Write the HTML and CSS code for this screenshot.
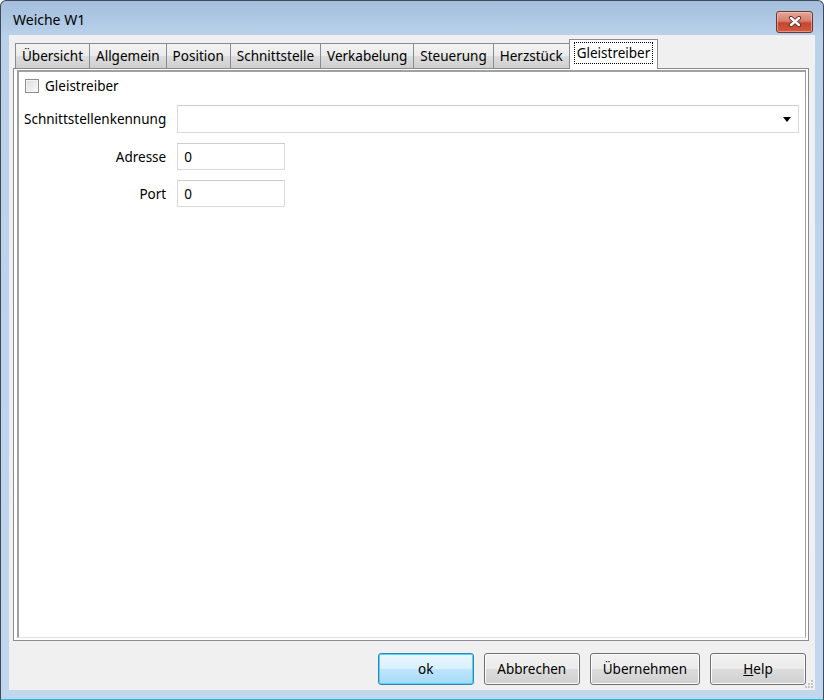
FILE: index.html
```html
<!DOCTYPE html>
<html lang="de">
<head>
    <meta charset="UTF-8">
    <title>Weiche W1</title>
    <link rel="stylesheet" href="styles.css">
</head>
<body>
    <div class="window">
        <div class="titlebar">
            <span class="title">Weiche W1</span>
            <div class="close-btn">
                <svg width="14" height="11" viewBox="0 0 14 11">
                    <path d="M3 2 L11 9 M11 2 L3 9" stroke="#5a2a24" stroke-width="4.2" stroke-linecap="round"/>
                    <path d="M3 2 L11 9 M11 2 L3 9" stroke="#ffffff" stroke-width="2.4" stroke-linecap="round"/>
                </svg>
            </div>
        </div>

        <div class="client">
            <div class="tabs">
                <div class="tab">Übersicht</div>
                <div class="tab">Allgemein</div>
                <div class="tab">Position</div>
                <div class="tab">Schnittstelle</div>
                <div class="tab">Verkabelung</div>
                <div class="tab">Steuerung</div>
                <div class="tab">Herzstück</div>
                <div class="tab active"><span class="focus">Gleistreiber</span></div>
            </div>

            <div class="panel">
                <div class="page">
                    <label class="check-row">
                        <span class="checkbox"></span>
                        Gleistreiber
                    </label>

                    <div class="form">
                        <label class="form-label">Schnittstellenkennung</label>
                        <div class="combo"><span class="arrow"></span></div>

                        <label class="form-label" for="adresse">Adresse</label>
                        <input class="field" type="text" id="adresse" value="0">

                        <label class="form-label" for="port">Port</label>
                        <input class="field" type="text" id="port" value="0">
                    </div>
                </div>
            </div>

            <div class="buttons">
                <button class="btn default">ok</button>
                <button class="btn">Abbrechen</button>
                <button class="btn">Übernehmen</button>
                <button class="btn"><u>H</u>elp</button>
            </div>

            <svg class="grip" width="10" height="10" viewBox="0 0 10 10">
                <rect x="7" y="1" width="2" height="2" fill="#c4c4c4"/>
                <rect x="4" y="4" width="2" height="2" fill="#c4c4c4"/>
                <rect x="7" y="4" width="2" height="2" fill="#c4c4c4"/>
                <rect x="1" y="7" width="2" height="2" fill="#c4c4c4"/>
                <rect x="4" y="7" width="2" height="2" fill="#c4c4c4"/>
                <rect x="7" y="7" width="2" height="2" fill="#c4c4c4"/>
            </svg>
        </div>
    </div>
</body>
</html>
```

FILE: styles.css
```css
body {
    margin: 0;
    font-family: "Noto Sans", "Open Sans", sans-serif;
    font-size: 13.5px;
    color: #000;
}
.window {
    width: 824px;
    height: 700px;
    box-sizing: border-box;
    border: 1px solid #3e4a57;
    border-bottom-color: #2ab7d6;
    border-radius: 6px 6px 0 0;
    background: linear-gradient(#a3bddb, #b9d1ea 34px, #c1d7ee);
    display: flex;
    flex-direction: column;
}
.titlebar {
    height: 34px;
    flex-shrink: 0;
    display: flex;
    align-items: center;
    justify-content: space-between;
    padding: 0 10px 0 12px;
}
.title {
    font-size: 14px;
    margin-top: 2px;
}
.close-btn {
    width: 35px;
    height: 20px;
    margin-top: 7px;
    border: 1px solid #6b3831;
    border-radius: 3px;
    background: linear-gradient(#e8a596, #d6806f 45%, #c6462f 55%, #d05a3e);
    box-shadow: inset 0 0 0 1px rgba(255, 220, 210, 0.45);
    display: flex;
    align-items: center;
    justify-content: center;
}
.client {
    position: relative;
    flex: 1;
    margin: 0 8px 9px 8px;
    background: #f0f0f0;
    display: flex;
    flex-direction: column;
    padding: 5px 6px 5px 4px;
}
.tabs {
    display: flex;
    align-items: flex-end;
    height: 28px;
    padding-left: 2px;
    position: relative;
    z-index: 1;
}
.tab {
    height: 25px;
    line-height: 24px;
    padding: 0 6px;
    border: 1px solid #898c95;
    border-bottom: none;
    border-left: none;
    background: linear-gradient(#f3f3f3, #ebebeb 50%, #dddddd 50%, #cfcfcf);
    box-sizing: border-box;
}
.tab:first-child {
    border-left: 1px solid #898c95;
}
.tab.active {
    height: 30px;
    margin-bottom: -1px;
    margin-left: -1px;
    border-left: 1px solid #898c95;
    background: #fff;
    padding: 2px 4px 0 4px;
    line-height: 22px;
}
.focus {
    display: block;
    border: 1px dotted #000;
    padding: 0 2px;
    line-height: 20px;
}
.panel {
    flex: 1;
    border: 1px solid #898c95;
    background: #fff;
    padding: 1px 2px 2px 3px;
    display: flex;
}
.page {
    flex: 1;
    border: 1px solid #e3e3e3;
    border-top: 2px solid #a0a0a0;
    border-left: 2px solid #a0a0a0;
    border-right-color: #a0a0a0;
    padding: 6px 5px 0 5px;
}
.check-row {
    display: flex;
    align-items: center;
    gap: 6px;
    height: 16px;
}
.checkbox {
    width: 12px;
    height: 12px;
    margin-left: 1px;
    border: 1px solid #8e8f8f;
    background: linear-gradient(135deg, #dcdcdc, #fbfbfb);
    box-shadow: inset 0 0 0 1px #f4f4f4;
}
.form {
    display: grid;
    grid-template-columns: auto 1fr;
    column-gap: 11px;
    row-gap: 10px;
    margin-top: 11px;
    align-items: center;
}
.form-label {
    justify-self: end;
}
.combo {
    height: 26px;
    border: 1px solid #dadada;
    border-top-color: #cdcdcd;
    position: relative;
    margin-right: 1px;
}
.arrow {
    position: absolute;
    right: 7px;
    top: 11px;
    border-left: 4px solid transparent;
    border-right: 4px solid transparent;
    border-top: 5px solid #000;
}
.field {
    width: 108px;
    height: 27px;
    box-sizing: border-box;
    border: 1px solid #dadada;
    border-top-color: #cdcdcd;
    padding: 0 6px;
    font-family: inherit;
    font-size: 13.5px;
    outline: none;
}
.buttons {
    display: flex;
    justify-content: flex-end;
    gap: 10px;
    margin-top: 12px;
    padding-right: 3px;
}
.btn {
    min-width: 96px;
    height: 32px;
    padding: 0 12px;
    border: 1px solid #707070;
    border-radius: 3px;
    background: linear-gradient(#f2f2f2, #ebebeb 50%, #dddddd 50%, #cfcfcf);
    box-shadow: inset 0 0 0 1px #fcfcfc;
    font-family: inherit;
    font-size: 13.5px;
    color: #000;
}
.btn.default {
    border-color: #3c7fb1;
    background: linear-gradient(#eaf6fd, #d9f0fc 50%, #bee6fd 50%, #a7d9f5);
    box-shadow: inset 0 0 0 1px #48d8fb;
}
.grip {
    position: absolute;
    right: 1px;
    bottom: 1px;
}
```
